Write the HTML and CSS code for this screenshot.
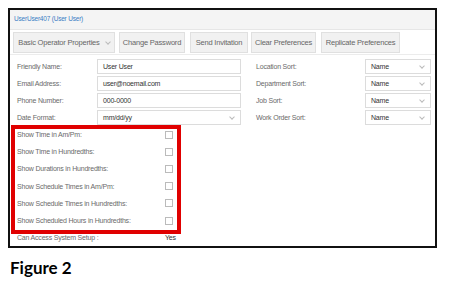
FILE: index.html
```html
<!DOCTYPE html>
<html>
<head>
<meta charset="utf-8">
<link rel="stylesheet" href="styles.css">
</head>
<body>
<div class="frame">
  <div class="header">UserUser407 (User User)</div>
  <div class="toolbar">
    <div class="btn b1">Basic Operator Properties <span class="chev"></span></div>
    <div class="btn b2">Change Password</div>
    <div class="btn b3">Send Invitation</div>
    <div class="btn b4">Clear Preferences</div>
    <div class="btn b5">Replicate Preferences</div>
  </div>
  <div class="form">
    <div class="row">
      <div class="lbl">Friendly Name:</div><div class="input">User User</div>
      <div class="lbl2">Location Sort:</div><div class="input sel">Name<span class="chev"></span></div>
    </div>
    <div class="row">
      <div class="lbl">Email Address:</div><div class="input">user@noemail.com</div>
      <div class="lbl2">Department Sort:</div><div class="input sel">Name<span class="chev"></span></div>
    </div>
    <div class="row">
      <div class="lbl">Phone Number:</div><div class="input">000-0000</div>
      <div class="lbl2">Job Sort:</div><div class="input sel">Name<span class="chev"></span></div>
    </div>
    <div class="row">
      <div class="lbl">Date Format:</div><div class="input sel">mm/dd/yy<span class="chev"></span></div>
      <div class="lbl2">Work Order Sort:</div><div class="input sel">Name<span class="chev"></span></div>
    </div>
    <div class="checks">
      <div class="crow"><div class="clbl">Show Time in Am/Pm:</div><div class="box"></div></div>
      <div class="crow"><div class="clbl">Show Time in Hundredths:</div><div class="box"></div></div>
      <div class="crow"><div class="clbl">Show Durations in Hundredths:</div><div class="box"></div></div>
      <div class="crow"><div class="clbl">Show Schedule Times in Am/Pm:</div><div class="box"></div></div>
      <div class="crow"><div class="clbl">Show Schedule Times in Hundredths:</div><div class="box"></div></div>
      <div class="crow"><div class="clbl">Show Scheduled Hours in Hundredths:</div><div class="box"></div></div>
      <div class="crow"><div class="clbl">Can Access System Setup :</div><div class="yes">Yes</div></div>
      <div class="redbox"></div>
    </div>
  </div>
</div>
<div class="figure">Figure 2</div>
</body>
</html>
```
FILE: styles.css
```css
html, body { margin: 0; padding: 0; background: #fff; }
body {
  font-family: "Liberation Sans", Arial, sans-serif;
  font-size: 7px;
  letter-spacing: -0.2px;
  color: #6a6a6a;
}
.frame {
  margin: 8px 0 0 8px;
  width: 425px;
  height: 236px;
  border: 2px solid #111;
  background: #fff;
}
.header {
  height: 19px;
  line-height: 18px;
  background: #f4f4f4;
  border-bottom: 1px solid #e6e6e6;
  color: #3b7dc4;
  padding-left: 4px;
  font-size: 6.5px;
}
.toolbar {
  display: flex;
  padding: 2px 0 0 3px;
  height: 22px;
  border-bottom: 1px solid #ececec;
}
.btn {
  box-sizing: border-box;
  height: 21px;
  background: #f1f1f1;
  border: 1px solid #e0e0e0;
  font-size: 7.5px;
  color: #666;
  display: flex;
  align-items: center;
  justify-content: center;
  gap: 6px;
  white-space: nowrap;
}
.b1 { width: 102px; }
.b2 { width: 66px; margin-left: 4px; }
.b3 { width: 58px; margin-left: 5px; }
.b4 { width: 65px; margin-left: 3px; }
.b5 { width: 79px; margin-left: 5px; }
.chev {
  display: inline-block;
  width: 3px;
  height: 3px;
  border-right: 1px solid #bbb;
  border-bottom: 1px solid #bbb;
  transform: rotate(45deg);
  margin-top: -2px;
}
.form { padding-top: 3px; }
.row {
  display: grid;
  grid-template-columns: 80px 144px 15px 109px 66px;
  align-items: center;
  height: 17px;
  padding-left: 7px;
}
.lbl { grid-column: 1; }
.input {
  grid-column: 2;
  box-sizing: border-box;
  height: 15px;
  border: 1px solid #dcdcdc;
  padding: 0 6px 0 5px;
  color: #333;
  display: flex;
  align-items: center;
  justify-content: space-between;
}
.lbl2 { grid-column: 4; }
.row .sel:last-child { grid-column: 5; }
.checks { position: relative; }
.crow {
  display: flex;
  align-items: center;
  height: 17.2px;
  padding-left: 7px;
}
.clbl { width: 148px; }
.box {
  width: 6px;
  height: 6px;
  border: 1px solid #bbb;
  background: #fff;
}
.yes { color: #333; }
.redbox {
  position: absolute;
  left: 1px;
  top: -1px;
  width: 162px;
  height: 101px;
  border: 4px solid #e00000;
}
.figure {
  font-family: Lato, "Open Sans", sans-serif;
  font-weight: 700;
  font-size: 17px;
  letter-spacing: 0;
  color: #000;
  margin: 9px 0 0 10px;
}
```
